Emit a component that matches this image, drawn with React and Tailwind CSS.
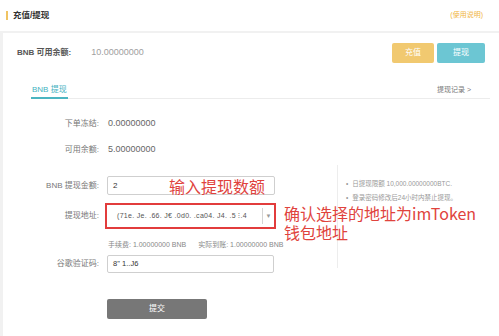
import React from 'react';

// 充值/提现 page — BNB withdraw form with red annotations
const labelCls = 'w-[96px] text-right text-[8px] text-[#777] shrink-0';

function Field({ label, children, className = '' }) {
  return (
    <div className={`flex items-center ${className}`}>
      <div className={labelCls}>{label}</div>
      <div className="ml-[8px]">{children}</div>
    </div>
  );
}

export default function App() {
  return (
    <div className="w-[499px] h-[336px] overflow-hidden bg-[#f1f1f1] font-['Liberation_Sans','Noto_Sans_CJK_SC',sans-serif] relative">
      {/* header */}
      <div className="h-[31px] bg-white flex items-center justify-between pl-[6px] pr-[16px]">
        <div className="flex items-center">
          <div className="w-[2px] h-[9px] bg-[#f0c463]" />
          <span className="ml-[5px] text-[8.5px] font-bold text-[#333]">充值/提现</span>
        </div>
        <span className="text-[7px] text-[#f0b540]">(使用说明)</span>
      </div>

      {/* card */}
      <div className="ml-[3px] mt-[2px] bg-white h-[303px]">
        {/* balance row */}
        <div className="flex items-center justify-between pl-[14px] pr-[14px] pt-[10px]">
          <div className="flex items-center">
            <span className="text-[8px] font-bold text-[#555]">BNB 可用余额:</span>
            <span className="ml-[20px] text-[9px] text-[#a0a0a0]">10.00000000</span>
          </div>
          <div className="flex gap-[3px]">
            <button className="w-[42px] h-[20px] rounded-[2px] bg-[#f1c970] text-white text-[8px]">充值</button>
            <button className="w-[48px] h-[20px] rounded-[2px] bg-[#6cc6d3] text-white text-[8px]">提现</button>
          </div>
        </div>

        {/* tabs */}
        <div className="mt-[20px] ml-[28px] mr-[9px] h-[16px] flex items-end justify-between border-b border-[#ececec]">
          <div className="h-[16px] flex items-center border-b-2 border-[#4bb5c1] -mb-px px-[1px]">
            <span className="text-[8px] text-[#45b2bf]">BNB 提现</span>
          </div>
          <span className="mb-[3px] mr-[19px] text-[7px] text-[#777]">提现记录 &gt;</span>
        </div>

        {/* frozen / available */}
        <div className="mt-[16px] h-[18px] flex items-center">
          <div className={labelCls}>下单冻结:</div>
          <div className="ml-[9px] text-[9px] text-[#666]">0.00000000</div>
        </div>
        <div className="mt-[8px] h-[18px] flex items-center">
          <div className={labelCls}>可用余额:</div>
          <div className="ml-[9px] text-[9px] text-[#666]">5.00000000</div>
        </div>

        {/* form + tips */}
        <div className="mt-[6px] flex">
          <div className="w-[334px] shrink-0">
            <Field label="BNB 提现金额:" className="mt-[11px]">
              <div className="w-[168px] h-[19px] border border-[#cfcfcf] rounded-[2px] flex items-center pl-[5px] text-[8px] text-[#333]">
                2
              </div>
            </Field>

            <Field label="提现地址:" className="mt-[8px]">
              <div className="-ml-[2px] w-[171px] h-[26px] border-2 border-[#e23c3c] flex items-center bg-white">
                <div className="flex-1 pl-[10px] text-[7px] text-[#555] tracking-[0.3px] whitespace-nowrap overflow-hidden">
                  (71e. Je. .66. J€ .0d0. .ca04. J4. .5 ⁝.4
                </div>
                <div className="w-[12px] h-[16px] border-l border-[#d4d4d4] flex items-center justify-center text-[6px] text-[#999]">
                  ▼
                </div>
              </div>
            </Field>

            <div className="mt-[10px] h-[12px] flex items-center pl-[105px] text-[7px] text-[#888] whitespace-nowrap">
              <span>手续费: 1.00000000 BNB</span>
              <span className="ml-[12px]">实际到账: 1.00000000 BNB</span>
            </div>

            <Field label="谷歌验证码:" className="mt-[4px]">
              <div className="w-[167px] h-[18px] border border-[#cfcfcf] rounded-[2px] flex items-center pl-[5px] text-[7.5px] text-[#333]">
                8'' 1..J6
              </div>
            </Field>

            <div className="mt-[21px] pl-[104px]">
              <button className="w-[100px] h-[20px] rounded-[2px] bg-[#777] text-white text-[8px]">提交</button>
            </div>
          </div>

          <div className="h-[103px] border-l border-[#ededed] pl-[8px] pt-[14px] text-[6.5px] text-[#999] whitespace-nowrap">
            <div className="h-[10px] flex items-center">• <span className="ml-[4px]">日提现限额 10,000.00000000BTC.</span></div>
            <div className="mt-[4px] h-[10px] flex items-center">• <span className="ml-[4px]">登录密码修改后24小时内禁止提现。</span></div>
          </div>
        </div>
      </div>

      {/* red annotations laid over the form */}
      <div className="absolute left-[169px] top-[176px] text-[16px] leading-[20px] text-[#e0433d] font-['Noto_Sans_CJK_SC',sans-serif] whitespace-nowrap">
        输入提现数额
      </div>
      <div className="absolute left-[284px] top-[204px] text-[16px] leading-[19px] text-[#e0433d] font-['Noto_Sans_CJK_SC',sans-serif] whitespace-nowrap">
        <div>确认选择的地址为imToken</div>
        <div>钱包地址</div>
      </div>
    </div>
  );
}
